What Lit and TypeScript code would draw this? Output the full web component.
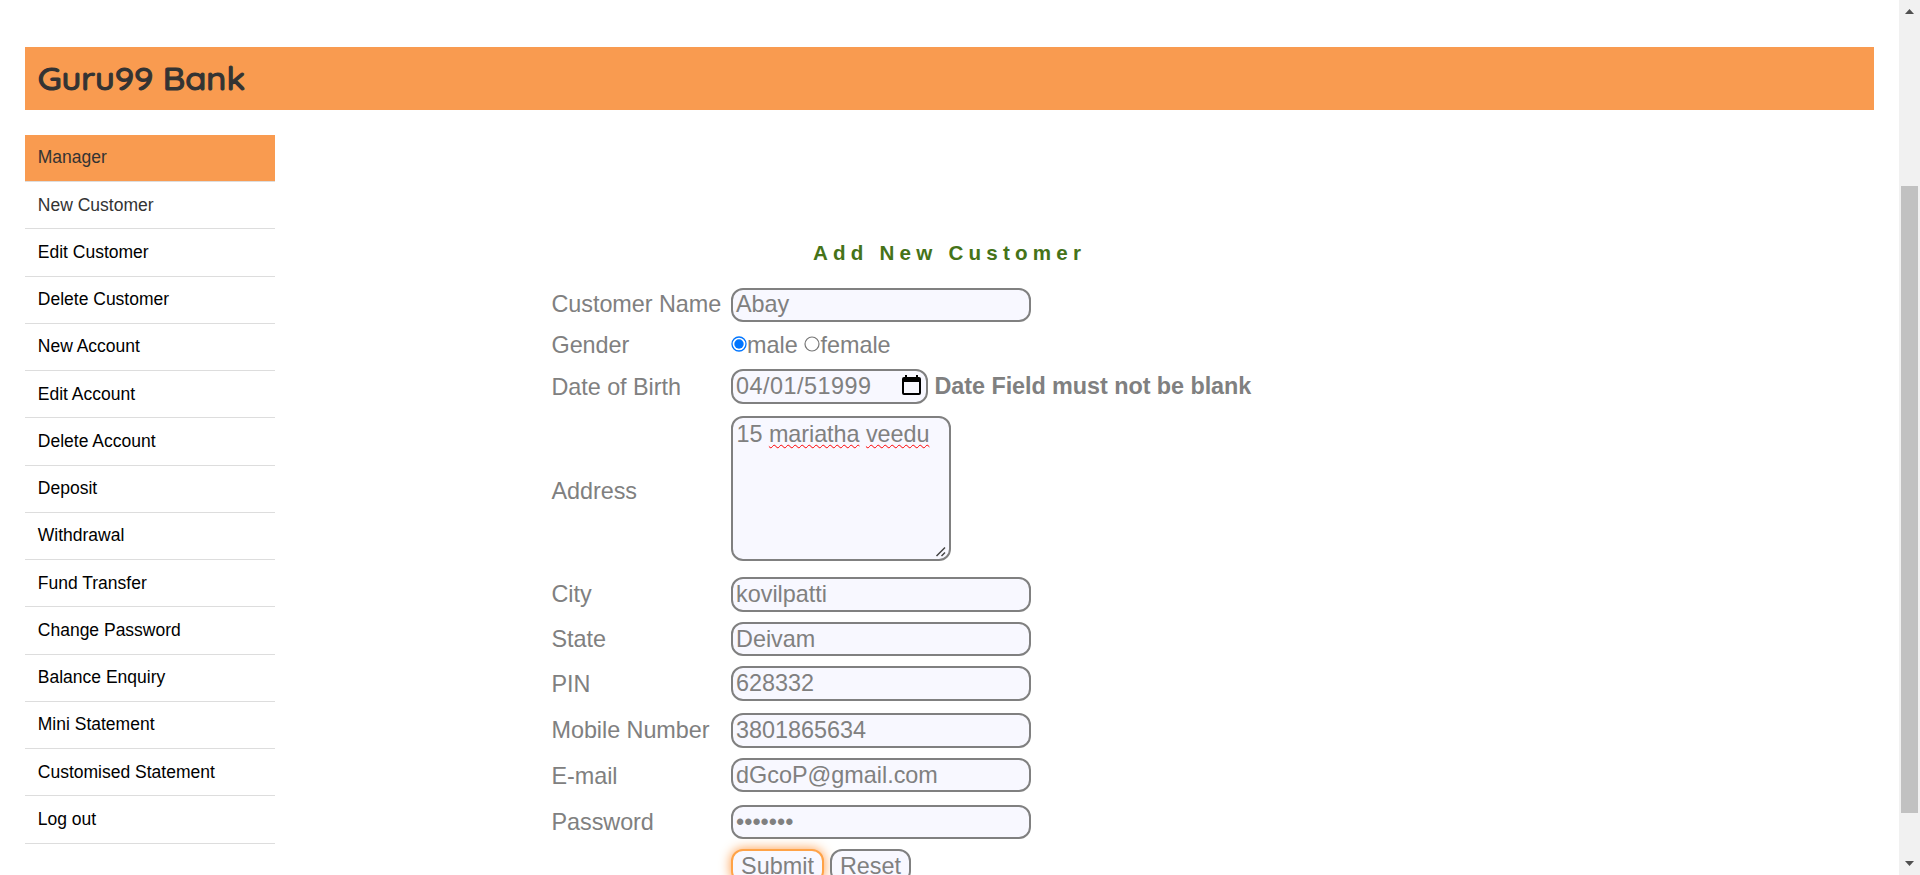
import { LitElement, html, css, svg } from "lit";
import { customElement } from "lit/decorators.js";
import { classMap } from "lit/directives/class-map.js";

const MENU = [
  "Manager", "New Customer", "Edit Customer", "Delete Customer", "New Account",
  "Edit Account", "Delete Account", "Deposit", "Withdrawal", "Fund Transfer",
  "Change Password", "Balance Enquiry", "Mini Statement", "Customised Statement", "Log out",
];

@customElement("bank-header")
class BankHeader extends LitElement {
  static styles = css`
    :host { display: block; height: 63px; background: #f99b50; }
    .brand { display: block; }
    .name {
      font-family: Quicksand, Inter, "Liberation Sans", sans-serif;
      font-size: 31.5px; font-weight: 500; font-feature-settings: "cv11" 1, "ss03" 1;
      fill: #333; stroke: #333; stroke-width: 1.1px; stroke-linejoin: round;
    }
  `;
  render() {
    return html`<svg class="brand" width="400" height="63">
      ${svg`<text class="name" x="12.7" y="43.3" textLength="207.5" lengthAdjust="spacingAndGlyphs">Guru99 Bank</text>`}
    </svg>`;
  }
}

@customElement("side-menu")
class SideMenu extends LitElement {
  static styles = css`
    :host { display: block; width: 250px; }
    .list { margin: 0; padding: 0; list-style: none; }
    .item {
      box-sizing: border-box; height: 47.25px; padding: 0.4px 0 0 12.8px;
      border-bottom: 1px solid #ddd; color: #000;
      font-size: 17.5px; line-height: 44px;
    }
    .soft { color: #333; }
    .active { background: #f99b50; background-clip: padding-box; }
  `;
  render() {
    return html`<ul class="list">${MENU.map((label, i) => html`
      <li class=${classMap({ item: true, active: i === 0, soft: i < 2 })}>${label}</li>`)}</ul>`;
  }
}

@customElement("customer-form")
class CustomerForm extends LitElement {
  static styles = css`
    :host { display: block; font-size: 23.4px; color: #808080; }
    .title {
      margin: 0 0 22px 262px; height: 27px; line-height: 27px; color: #457319;
      font-size: 20.6px; font-weight: bold; letter-spacing: 5.2px; white-space: nowrap;
    }
    .row { display: flex; align-items: flex-start; white-space: nowrap; line-height: 27px; }
    .label { box-sizing: border-box; width: 180px; flex: none; padding: 4px 0 0 0.5px; letter-spacing: -0.05px; }
    .low { padding-top: 5px; }
    .field {
      box-sizing: border-box; width: 300px; height: 34px; padding: 2px 3px 0;
      border: 2px solid #808080; border-radius: 12px; background: #f8f8ff;
    }
    .tall { height: 35px; }
    .first .field { padding-top: 1px; }
    .first .label { padding-top: 3px; }
    .g8 { margin-bottom: 8px; }
    .g10 { margin-bottom: 10px; }
    .g12 { margin-bottom: 12px; }
    .g13 { margin-bottom: 13px; }
    .g16 { margin-bottom: 16px; }
    .gender { height: 29px; align-items: center; }
    .gender .label { padding-top: 2px; }
    .choice { padding-top: 2px; }
    .radio { display: block; flex: none; }
    .female { margin-left: 6.7px; }
    .date { width: 197px; display: flex; justify-content: space-between; }
    .digits { letter-spacing: 0.5px; }
    .calendar { display: block; margin: 2px 2px 0 0; }
    .error { font-weight: bold; letter-spacing: -0.06px; padding: 4px 0 0 6.5px; }
    .address .label { padding-top: 62px; }
    .area { width: 220px; height: 145px; padding: 3px 3.5px; display: flex; justify-content: space-between; letter-spacing: -0.05px; }
    .spell { text-decoration: underline wavy #f00 1px; text-decoration-skip-ink: none; text-underline-offset: 2px; }
    .grip { display: block; align-self: flex-end; margin: 0 -1.5px -2px -12px; flex: none; }
    .btn { width: 81px; text-align: center; padding: 2px 0 0; }
    .submit { width: 93px; margin-right: 6px; border-color: #ffa348; box-shadow: 0 0 12px #ff9a45; }
  `;
  text(label: string, value: string, gap: string, tall = false, low = false) {
    return html`<div class="row ${gap}">
      <div class=${classMap({ label: true, low })}>${label}</div>
      <div class=${classMap({ field: true, tall })}>${value}</div>
    </div>`;
  }
  render() {
    return html`
      <h3 class="title">Add New Customer</h3>
      ${this.text("Customer Name", "Abay", "first g8")}
      <div class="row gender g10">
        <div class="label">Gender</div>
        <svg class="radio" width="16" height="16"><circle cx="8" cy="8" r="7" fill="#fff" stroke="#0075ff" stroke-width="1.3"/><circle cx="8" cy="8" r="4.7" fill="#0075ff"/></svg>
        <span class="choice">male</span>
        <svg class="radio female" width="16" height="16"><circle cx="8" cy="8" r="7" fill="#fff" stroke="#767676" stroke-width="1.2"/></svg>
        <span class="choice">female</span>
      </div>
      <div class="row g12">
        <div class="label low">Date of Birth</div>
        <div class="field tall date"><span class="digits">04/01/51999</span>
          <svg class="calendar" width="19" height="21"><path d="M3 0h2v2h9V0h2v2h1q2 0 2 2v14q0 2-2 2H2q-2 0-2-2V4q0-2 2-2h1zM2 7v11h15V7z" fill="#000" fill-rule="evenodd"/></svg>
        </div>
        <div class="error">Date Field must not be blank</div>
      </div>
      <div class="row g16 address">
        <div class="label">Address</div>
        <div class="field area"><span>15 <span class="spell">mariatha</span> <span class="spell">veedu</span></span>
          <svg class="grip" width="12" height="12"><path d="M1.5 10 10 1.5M6.5 10 10 6.5" stroke="#444" stroke-width="1.5" fill="none"/></svg>
        </div>
      </div>
      ${this.text("City", "kovilpatti", "g10", true)}
      ${this.text("State", "Deivam", "g10")}
      ${this.text("PIN", "628332", "g12", true, true)}
      ${this.text("Mobile Number", "3801865634", "g10", true)}
      ${this.text("E-mail", "dGcoP@gmail.com", "g13", false, true)}
      ${this.text("Password", "•••••••", "g10")}
      <div class="row">
        <div class="label"></div>
        <div class="field btn submit">Submit</div>
        <div class="field btn">Reset</div>
      </div>`;
  }
}

@customElement("page-scrollbar")
class PageScrollbar extends LitElement {
  static styles = css`
    :host {
      box-sizing: border-box; display: flex; flex-direction: column; align-items: center;
      width: 21px; height: 875px; padding: 9px 2px; background: #f1f1f1;
    }
    .thumb { width: 17px; height: 627px; margin: 172px 0 48px; background: #c1c1c1; }
    .arrow { display: block; flex: none; }
  `;
  render() {
    return html`
      <svg class="arrow" width="9" height="5"><path d="M0 5 4.5 0 9 5z" fill="#505050"/></svg>
      <div class="thumb"></div>
      <svg class="arrow" width="9" height="5"><path d="M0 0 4.5 5 9 0z" fill="#505050"/></svg>`;
  }
}

@customElement("app-root")
class AppRoot extends LitElement {
  static styles = css`
    :host {
      display: flex; width: 1920px; height: 875px; overflow: hidden; background: #fff;
      font-family: "Liberation Sans", Arial, sans-serif;
    }
    .page { flex: 1; padding: 47px 25px 0; min-width: 0; }
    .columns { display: flex; align-items: flex-start; padding-top: 24.9px; }
    .form { margin: 104.1px 0 0 276px; }
  `;
  render() {
    return html`
      <div class="page">
        <bank-header></bank-header>
        <div class="columns">
          <side-menu></side-menu>
          <customer-form class="form"></customer-form>
        </div>
      </div>
      <page-scrollbar></page-scrollbar>`;
  }
}
